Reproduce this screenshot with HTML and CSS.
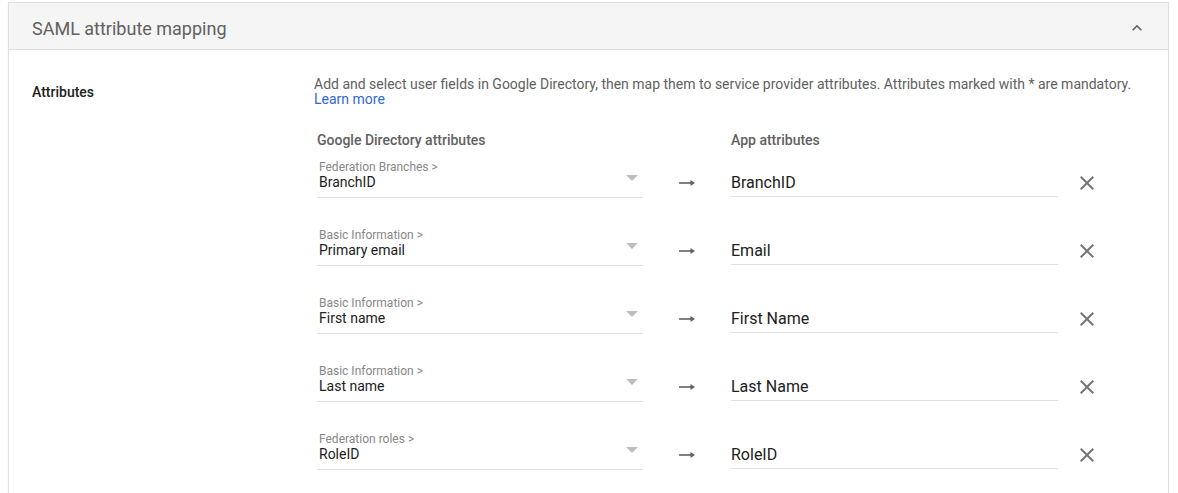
FILE: index.html
```html
<!DOCTYPE html>
<html lang="en">
<head>
    <meta charset="UTF-8">
    <title>SAML attribute mapping</title>
    <link rel="stylesheet" href="styles.css">
</head>
<body>
    <div class="card">
        <div class="card-header">
            <h2>SAML attribute mapping</h2>
            <svg class="chevron" width="20" height="20" viewBox="0 0 24 24"><path d="M12 8l-6 6 1.41 1.41L12 10.83l4.59 4.58L18 14z"/></svg>
        </div>

        <div class="card-body">
            <div class="section-label">Attributes</div>
            <div class="section-content">
                <p class="description">
                    Add and select user fields in Google Directory, then map them to service provider attributes. Attributes marked with * are mandatory.<br>
                    <a href="#">Learn more</a>
                </p>

                <div class="mapping-head">
                    <div class="col-dir">Google Directory attributes</div>
                    <div class="col-arrow"></div>
                    <div class="col-app">App attributes</div>
                </div>

                <div class="mapping-row">
                    <div class="select-field col-dir">
                        <div class="select-category">Federation Branches &gt;</div>
                        <div class="select-value">BranchID</div>
                        <span class="caret"></span>
                    </div>
                    <div class="col-arrow"><svg width="16" height="8" viewBox="0 0 16 8"><path d="M0 4h13" stroke="#616161" stroke-width="1.6"/><path d="M11.5 1l4.5 3-4.5 3z" fill="#616161"/></svg></div>
                    <div class="text-field col-app">BranchID</div>
                    <svg class="remove" width="24" height="24" viewBox="0 0 24 24"><path d="M19 6.41L17.59 5 12 10.59 6.41 5 5 6.41 10.59 12 5 17.59 6.41 19 12 13.41 17.59 19 19 17.59 13.41 12z"/></svg>
                </div>

                <div class="mapping-row">
                    <div class="select-field col-dir">
                        <div class="select-category">Basic Information &gt;</div>
                        <div class="select-value">Primary email</div>
                        <span class="caret"></span>
                    </div>
                    <div class="col-arrow"><svg width="16" height="8" viewBox="0 0 16 8"><path d="M0 4h13" stroke="#616161" stroke-width="1.6"/><path d="M11.5 1l4.5 3-4.5 3z" fill="#616161"/></svg></div>
                    <div class="text-field col-app">Email</div>
                    <svg class="remove" width="24" height="24" viewBox="0 0 24 24"><path d="M19 6.41L17.59 5 12 10.59 6.41 5 5 6.41 10.59 12 5 17.59 6.41 19 12 13.41 17.59 19 19 17.59 13.41 12z"/></svg>
                </div>

                <div class="mapping-row">
                    <div class="select-field col-dir">
                        <div class="select-category">Basic Information &gt;</div>
                        <div class="select-value">First name</div>
                        <span class="caret"></span>
                    </div>
                    <div class="col-arrow"><svg width="16" height="8" viewBox="0 0 16 8"><path d="M0 4h13" stroke="#616161" stroke-width="1.6"/><path d="M11.5 1l4.5 3-4.5 3z" fill="#616161"/></svg></div>
                    <div class="text-field col-app">First Name</div>
                    <svg class="remove" width="24" height="24" viewBox="0 0 24 24"><path d="M19 6.41L17.59 5 12 10.59 6.41 5 5 6.41 10.59 12 5 17.59 6.41 19 12 13.41 17.59 19 19 17.59 13.41 12z"/></svg>
                </div>

                <div class="mapping-row">
                    <div class="select-field col-dir">
                        <div class="select-category">Basic Information &gt;</div>
                        <div class="select-value">Last name</div>
                        <span class="caret"></span>
                    </div>
                    <div class="col-arrow"><svg width="16" height="8" viewBox="0 0 16 8"><path d="M0 4h13" stroke="#616161" stroke-width="1.6"/><path d="M11.5 1l4.5 3-4.5 3z" fill="#616161"/></svg></div>
                    <div class="text-field col-app">Last Name</div>
                    <svg class="remove" width="24" height="24" viewBox="0 0 24 24"><path d="M19 6.41L17.59 5 12 10.59 6.41 5 5 6.41 10.59 12 5 17.59 6.41 19 12 13.41 17.59 19 19 17.59 13.41 12z"/></svg>
                </div>

                <div class="mapping-row">
                    <div class="select-field col-dir">
                        <div class="select-category">Federation roles &gt;</div>
                        <div class="select-value">RoleID</div>
                        <span class="caret"></span>
                    </div>
                    <div class="col-arrow"><svg width="16" height="8" viewBox="0 0 16 8"><path d="M0 4h13" stroke="#616161" stroke-width="1.6"/><path d="M11.5 1l4.5 3-4.5 3z" fill="#616161"/></svg></div>
                    <div class="text-field col-app">RoleID</div>
                    <svg class="remove" width="24" height="24" viewBox="0 0 24 24"><path d="M19 6.41L17.59 5 12 10.59 6.41 5 5 6.41 10.59 12 5 17.59 6.41 19 12 13.41 17.59 19 19 17.59 13.41 12z"/></svg>
                </div>
            </div>
        </div>
    </div>
</body>
</html>
```

FILE: styles.css
```css
body {
    font-family: Roboto, "Liberation Sans", Arial, sans-serif;
    color: #212121;
    margin: 0;
    background: #fff;
}

.card {
    margin: 2px 9px 0 8px;
    border: 1px solid #e0e0e0;
    border-bottom: none;
    background: #fff;
    box-shadow: 0 1px 2px rgba(0,0,0,0.06);
}

.card-header {
    display: flex;
    align-items: center;
    justify-content: space-between;
    box-sizing: border-box;
    height: 47px;
    padding: 4px 21px 0 23px;
    background: #f5f5f5;
    border-bottom: 1px solid #e0e0e0;
}

.card-header h2 {
    margin: 0;
    font-size: 18px;
    font-weight: 400;
    color: #616161;
}

.chevron {
    fill: #616161;
}

.card-body {
    display: flex;
    padding: 27px 0 40px 23px;
}

.section-label {
    width: 282px;
    flex-shrink: 0;
    padding-top: 7px;
    font-size: 14px;
    line-height: 16px;
    font-weight: 500;
    color: #212121;
}

.section-content {
    flex: 1;
}

.description {
    margin: 0 0 25px;
    font-size: 14px;
    line-height: 15px;
    color: #616161;
}

.description a {
    color: #3367d6;
    text-decoration: none;
}

.mapping-head {
    display: flex;
    padding-left: 3px;
    margin-bottom: 12px;
    font-size: 14px;
    line-height: 16px;
    font-weight: 500;
    color: #616161;
}

.col-dir {
    width: 326px;
    flex-shrink: 0;
}

.col-arrow {
    width: 88px;
    flex-shrink: 0;
    display: flex;
    justify-content: center;
    padding-right: 1px;
    box-sizing: border-box;
}

.col-app {
    width: 327px;
    flex-shrink: 0;
}

.mapping-row {
    display: flex;
    align-items: flex-end;
    padding-left: 3px;
    margin-bottom: 30px;
}

.mapping-row .col-arrow svg {
    margin-bottom: 11px;
}

.select-field {
    position: relative;
    padding: 0 2px 6px;
    box-sizing: border-box;
    border-bottom: 1px solid #e0e0e0;
}

.select-category {
    font-size: 12px;
    line-height: 14px;
    color: #888;
}

.select-value {
    font-size: 14px;
    line-height: 17px;
    color: #212121;
}

.caret {
    position: absolute;
    right: 5px;
    top: 15px;
    width: 0;
    height: 0;
    border-left: 6px solid transparent;
    border-right: 6px solid transparent;
    border-top: 6px solid #bdbdbd;
}

.text-field {
    font-size: 16px;
    line-height: 19px;
    padding-bottom: 4px;
    margin-bottom: 1px;
    border-bottom: 1px solid #e0e0e0;
    color: #212121;
}

.remove {
    fill: #757575;
    margin: 0 0 3px 17px;
}
```
